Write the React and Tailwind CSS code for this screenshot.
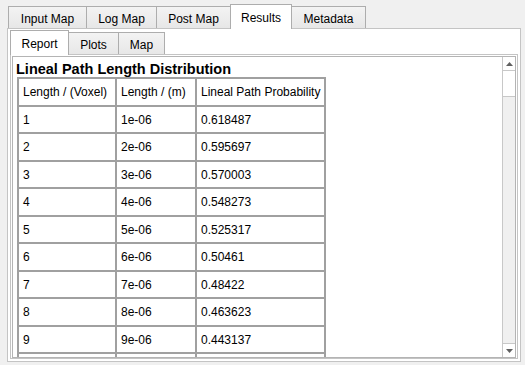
const rows = [
  ['1', '1e-06', '0.618487'],
  ['2', '2e-06', '0.595697'],
  ['3', '3e-06', '0.570003'],
  ['4', '4e-06', '0.548273'],
  ['5', '5e-06', '0.525317'],
  ['6', '6e-06', '0.50461'],
  ['7', '7e-06', '0.48422'],
  ['8', '8e-06', '0.463623'],
  ['9', '9e-06', '0.443137'],
  ['', '', ''],
];

const outerTabs = [
  { label: 'Input Map', w: 'w-[79px]' },
  { label: 'Log Map', w: 'w-[71px]' },
  { label: 'Post Map', w: 'w-[75px]' },
  { label: 'Results', w: 'w-[62px]', active: true },
  { label: 'Metadata', w: 'w-[75px]' },
];

const innerTabs = [
  { label: 'Report', w: 'w-[59px]', active: true },
  { label: 'Plots', w: 'w-[51px]' },
  { label: 'Map', w: 'w-[47px]' },
];

function Tab({ label, w, active, first }) {
  if (active) {
    return (
      <div
        className={`${w} ${first ? '' : '-ml-px'} relative z-10 -mb-px flex h-[25px] items-start justify-center border border-b-0 border-[#adadad] bg-white pt-[4px]`}
      >
        {label}
      </div>
    );
  }
  return (
    <div
      className={`${w} ${first ? '' : '-ml-px'} flex h-[22px] items-start justify-center border border-b-0 border-[#adadad] bg-linear-to-b from-[#f3f3f3] to-[#e7e7e7] pt-[3px]`}
    >
      {label}
    </div>
  );
}

function Arrow({ down }) {
  return (
    <svg width="7" height="4" viewBox="0 0 7 4">
      <polygon points={down ? '0,0 7,0 3.5,4' : '0,4 7,4 3.5,0'} fill="#606060" />
    </svg>
  );
}

function Cell({ children, w }) {
  return (
    <div className={`${w} h-[27.5px] border-r-2 border-b-2 border-[#a0a0a0] pl-[4px] pt-[1px] leading-[24px] whitespace-nowrap`}>
      {children}
    </div>
  );
}

function Row({ cells }) {
  return (
    <div className="flex">
      <Cell w="w-[98px]">{cells[0]}</Cell>
      <Cell w="w-[80px]">{cells[1]}</Cell>
      <Cell w="w-[129px]">{cells[2]}</Cell>
    </div>
  );
}

export default function App() {
  return (
    <div
      className="h-[365px] w-[525px] overflow-hidden bg-[#f0f0f0] pl-[7px] pt-[4px] text-[12px] text-black"
      style={{ fontFamily: '"Liberation Sans", Arial, sans-serif' }}
    >
      <div className="flex h-[24px] items-end pl-[1px]">
        {outerTabs.map((t, i) => (
          <Tab key={t.label} {...t} first={i === 0} />
        ))}
      </div>
      <div className="h-[334px] w-[514px] border border-[#c4c4c4] bg-white pl-[2px] pr-[2px] pt-[1px]">
        <div className="flex h-[24px] items-end">
          {innerTabs.map((t, i) => (
            <Tab key={t.label} {...t} first={i === 0} />
          ))}
        </div>
        <div className="h-[305px] w-[508px] border border-[#c4c4c4] bg-white p-[1px]">
          <div className="flex h-[302px] w-[504px] border border-[#b4b4b4] bg-white">
            <div className="flex-1 overflow-hidden pl-[3px] pt-[5px]">
              <div className="text-[14.5px] font-bold leading-[15px]">Lineal Path Length Distribution</div>
              <div className="ml-[1px] w-[309px] border-t-2 border-l-2 border-[#a0a0a0]">
                <Row cells={['Length / (Voxel)', 'Length / (m)', 'Lineal Path Probability']} />
                {rows.map((r, i) => (
                  <Row key={i} cells={r} />
                ))}
              </div>
            </div>
            <div className="flex w-[13px] flex-col border-l border-[#c8c8c8] bg-[#f0f0f0]">
              <div className="flex h-[14px] items-center justify-center border-b border-[#c8c8c8] bg-white">
                <Arrow />
              </div>
              <div className="h-[26px] border-b border-[#c8c8c8] bg-white" />
              <div className="flex-1" />
              <div className="flex h-[14px] items-center justify-center border-t border-[#c8c8c8] bg-white">
                <Arrow down />
              </div>
            </div>
          </div>
        </div>
      </div>
    </div>
  );
}
